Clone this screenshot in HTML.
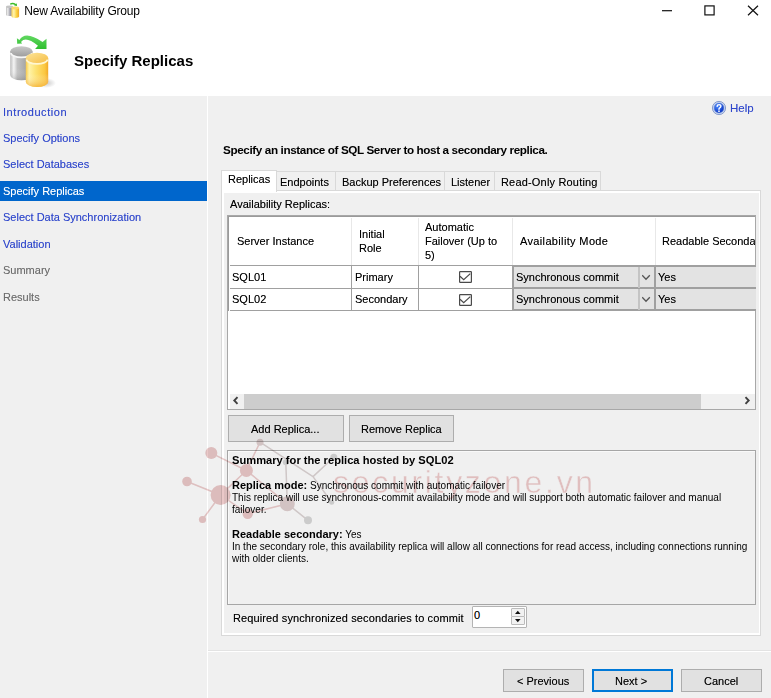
<!DOCTYPE html>
<html><head><meta charset="utf-8">
<style>
*{margin:0;padding:0;box-sizing:border-box}
html,body{width:771px;height:698px;overflow:hidden;background:#f0f0f0;font-family:"Liberation Sans",sans-serif;font-size:11px;color:#000}
.a{position:absolute}
.t{position:absolute;white-space:nowrap;line-height:13px;font-size:11px;text-shadow:0 0 0 rgba(0,0,0,.45)}
.thin{text-shadow:none}
.nav{color:#2f47cc;left:3px;text-shadow:0 0 0 rgba(47,71,204,.45)}
.navg{color:#6d6d6d;left:3px;text-shadow:0 0 0 rgba(109,109,109,.45)}
.b{font-weight:bold;text-shadow:none}
</style></head><body>
<!-- header white -->
<div class="a" style="left:0;top:0;width:771px;height:96px;background:#fff"></div>
<!-- small title icon -->
<svg class="a" style="left:0;top:0" width="24" height="22" viewBox="0 0 24 22">
 <defs>
  <linearGradient id="gs" x1="0" x2="1"><stop offset="0" stop-color="#bdbdbd"/><stop offset=".25" stop-color="#ececec"/><stop offset=".6" stop-color="#9c9ca8"/><stop offset="1" stop-color="#b4b4b4"/></linearGradient>
  <linearGradient id="ys" x1="0" x2="1"><stop offset="0" stop-color="#f8d050"/><stop offset=".3" stop-color="#fff4b0"/><stop offset=".65" stop-color="#fcd444"/><stop offset="1" stop-color="#eca828"/></linearGradient>
 </defs>
 <path d="M6 6.8 V14.8 A3.5 1.3 0 0 0 13 14.8 V6.8 Z" fill="url(#gs)"/>
 <ellipse cx="9.5" cy="6.8" rx="3.5" ry="1.3" fill="#c4c4c4"/>
 <path d="M11.5 8 V16.6 A3.8 1.4 0 0 0 19.1 16.6 V8 Z" fill="url(#ys)"/>
 <ellipse cx="15.3" cy="8" rx="3.8" ry="1.4" fill="#fbd86a"/>
 <path d="M10.2 3.2 L10.3 4.8 Q13 3.6 14.8 5 L14 5.6 L17 6 L16.8 3.2 L16 3.9 Q13 2 10.2 3.2 Z" fill="#3cbc2c"/>
</svg>
<div class="t thin" style="left:24.3px;top:5.1px;font-size:12px;letter-spacing:-0.2px;color:#000">New Availability Group</div>
<!-- window controls -->
<svg class="a" style="left:660px;top:8px" width="14" height="5" viewBox="0 0 14 5"><path d="M2 2.7 H12" stroke="#111" stroke-width="1.2"/></svg>
<svg class="a" style="left:702px;top:4px" width="14" height="13" viewBox="0 0 14 13"><rect x="2.9" y="1.9" width="9.2" height="9" fill="none" stroke="#111" stroke-width="1.2"/></svg>
<svg class="a" style="left:746px;top:4px" width="14" height="13" viewBox="0 0 14 13"><path d="M2 1.8 L12 11.3 M12 1.8 L2 11.3" stroke="#111" stroke-width="1.2"/></svg>

<!-- big header icon -->
<svg class="a" style="left:0;top:0" width="60" height="95" viewBox="0 0 60 95">
 <defs>
  <linearGradient id="g1" x1="0" x2="1"><stop offset="0" stop-color="#bcbcbc"/><stop offset=".16" stop-color="#f4f4f4"/><stop offset=".32" stop-color="#c2c2c2"/><stop offset=".7" stop-color="#a6a6a6"/><stop offset="1" stop-color="#b6b6b6"/></linearGradient>
  <linearGradient id="g1v" x1="0" y1="0" x2="0" y2="1"><stop offset="0" stop-color="#fff" stop-opacity="0"/><stop offset=".6" stop-color="#fff" stop-opacity="0"/><stop offset="1" stop-color="#777" stop-opacity=".35"/></linearGradient>
  <linearGradient id="g1t" x1="0" y1="0" x2="0" y2="1"><stop offset="0" stop-color="#c9c9c9"/><stop offset="1" stop-color="#9d9d9d"/></linearGradient>
  <linearGradient id="y1" x1="0" x2="1"><stop offset="0" stop-color="#f8c848"/><stop offset=".15" stop-color="#fff3a8"/><stop offset=".45" stop-color="#fde272"/><stop offset=".85" stop-color="#fbc740"/><stop offset="1" stop-color="#f2a928"/></linearGradient>
  <linearGradient id="y1v" x1="0" y1="0" x2="0" y2="1"><stop offset="0" stop-color="#fff" stop-opacity="0"/><stop offset=".55" stop-color="#fff" stop-opacity="0"/><stop offset="1" stop-color="#f0a020" stop-opacity=".6"/></linearGradient>
  <linearGradient id="y1t" x1="0" y1="0" x2="1" y2="1"><stop offset="0" stop-color="#fde69a"/><stop offset="1" stop-color="#f5bc44"/></linearGradient>
  <radialGradient id="sh"><stop offset="0" stop-color="#9a9a9a" stop-opacity=".55"/><stop offset="1" stop-color="#9a9a9a" stop-opacity="0"/></radialGradient>
  <linearGradient id="ar" x1="0" y1="0" x2="0" y2="1"><stop offset="0" stop-color="#62d862"/><stop offset="1" stop-color="#2fbf2f"/></linearGradient>
 </defs>
 <ellipse cx="46" cy="83" rx="10" ry="5" fill="url(#sh)"/>
 <path d="M10.2 51.5 V75 A11.2 5.2 0 0 0 32.6 75 V51.5 Z" fill="url(#g1)"/>
 <path d="M10.2 51.5 V75 A11.2 5.2 0 0 0 32.6 75 V51.5 Z" fill="url(#g1v)"/>
 <ellipse cx="21.4" cy="51.5" rx="11.2" ry="5.2" fill="url(#g1t)"/>
 <path d="M11 53 A10.4 4.4 0 0 0 31.8 53" stroke="#f6f6f6" stroke-width="1.7" fill="none"/>
 <ellipse cx="37" cy="87" rx="11" ry="3" fill="#f0b030" opacity=".0"/>
 <path d="M25.8 58 V81.8 A11.2 5.2 0 0 0 48.2 81.8 V58 Z" fill="url(#y1)"/>
 <path d="M25.8 58 V81.8 A11.2 5.2 0 0 0 48.2 81.8 V58 Z" fill="url(#y1v)"/>
 <ellipse cx="37" cy="58" rx="11.2" ry="5.2" fill="url(#y1t)"/>
 <path d="M26.6 59.5 A10.4 4.4 0 0 0 47.4 59.5" stroke="#fff6d0" stroke-width="1.7" fill="none"/>
 <path d="M16.9 38.2 L17.2 43.7 L22.1 43.4 L21 42 Q25.7 35.75 38 45.7 L35.1 48.9 L46.5 48.9 L46.5 38.7 L42.6 41.9 Q25 29.9 19.5 40 Z" fill="url(#ar)"/>
</svg>
<div class="t b" style="left:74px;top:52px;font-size:15px;line-height:18px">Specify Replicas</div>

<!-- left nav -->
<div class="a" style="left:207px;top:96px;width:1px;height:602px;background:#fff"></div>
<div class="a" style="left:0;top:181px;width:207px;height:20px;background:#0066cc"></div>
<div class="t nav" style="top:105.5px;letter-spacing:0.55px">Introduction</div>
<div class="t nav" style="top:131.5px">Specify Options</div>
<div class="t nav" style="top:158.3px">Select Databases</div>
<div class="t" style="left:3px;top:184.5px;color:#fff;text-shadow:0 0 0 rgba(255,255,255,.45)">Specify Replicas</div>
<div class="t nav" style="top:211.3px">Select Data Synchronization</div>
<div class="t nav" style="top:237.7px">Validation</div>
<div class="t navg" style="top:264.3px">Summary</div>
<div class="t navg" style="top:290.7px">Results</div>

<!-- help -->
<svg class="a" style="left:711px;top:100px" width="16" height="16" viewBox="0 0 16 16">
 <defs><radialGradient id="hb" cx=".35" cy=".3" r=".75"><stop offset="0" stop-color="#4f8cff"/><stop offset="1" stop-color="#0630c0"/></radialGradient></defs>
 <circle cx="8" cy="8" r="6.6" fill="#c8d6f0" stroke="#7d93c8" stroke-width="0.9"/>
 <circle cx="8" cy="8" r="4.9" fill="url(#hb)" stroke="#6f8fd8" stroke-width=".5"/>
 <path d="M6.1 6.4 Q6.2 4.6 8.1 4.6 Q10 4.7 9.9 6.3 Q9.8 7.3 8.7 7.9 Q8 8.3 8 9.3" stroke="#fff" stroke-width="1.4" fill="none" stroke-linecap="round"/>
 <circle cx="8" cy="11.2" r=".85" fill="#fff"/>
</svg>
<div class="t nav" style="left:730px;top:102px;font-size:11.5px">Help</div>

<div class="t b" style="left:223px;top:142.5px;font-size:11.7px;letter-spacing:-0.38px">Specify an instance of SQL Server to host a secondary replica.</div>

<!-- bottom separator -->
<div class="a" style="left:208px;top:651px;width:563px;height:1px;background:#fff"></div>
<div class="a" style="left:208px;top:650px;width:563px;height:1px;background:#e3e3e3"></div>

<!-- tabs -->
<div class="a" style="left:221px;top:190px;width:540px;height:446px;border:1px solid #d9d9d9;background:#fff"></div>
<div class="a" style="left:224px;top:193px;width:535px;height:440px;background:#f0f0f0"></div>
<div class="a" style="left:276px;top:171px;width:60px;height:19px;border:1px solid #d9d9d9;border-bottom:0;background:#f0f0f0"></div>
<div class="a" style="left:335px;top:171px;width:110px;height:19px;border:1px solid #d9d9d9;border-bottom:0;background:#f0f0f0"></div>
<div class="a" style="left:444px;top:171px;width:51px;height:19px;border:1px solid #d9d9d9;border-bottom:0;background:#f0f0f0"></div>
<div class="a" style="left:494px;top:171px;width:107px;height:19px;border:1px solid #d9d9d9;border-bottom:0;background:#f0f0f0"></div>
<div class="a" style="left:221px;top:170px;width:56px;height:22px;border:1px solid #d9d9d9;border-bottom:0;background:#fff"></div>
<div class="t" style="left:228px;top:173px">Replicas</div>
<div class="t" style="left:280px;top:175.7px">Endpoints</div>
<div class="t" style="left:342px;top:175.7px">Backup Preferences</div>
<div class="t" style="left:451px;top:175.7px">Listener</div>
<div class="t" style="left:501px;top:175.7px;letter-spacing:0.18px">Read-Only Routing</div>
<div class="t" style="left:230px;top:197.6px">Availability Replicas:</div>

<!-- grid -->
<div class="a" style="left:227px;top:215px;width:529px;height:195px;border:1px solid #a8a8a8;background:#fff"></div>
<div class="a" style="left:228px;top:216px;width:527px;height:1px;background:#9a9a9a"></div>
<div class="a" style="left:228px;top:216px;width:1px;height:95px;background:#9a9a9a"></div>
<div class="a" style="left:230px;top:265px;width:525px;height:1px;background:#a0a0a0"></div>
<div class="a" style="left:230px;top:288px;width:525px;height:1px;background:#a0a0a0"></div>
<div class="a" style="left:230px;top:310px;width:525px;height:1px;background:#a0a0a0"></div>
<div class="a" style="left:351px;top:218px;width:1px;height:47px;background:#e8e8e8"></div>
<div class="a" style="left:418px;top:218px;width:1px;height:47px;background:#e8e8e8"></div>
<div class="a" style="left:512px;top:218px;width:1px;height:47px;background:#e8e8e8"></div>
<div class="a" style="left:655px;top:218px;width:1px;height:47px;background:#e8e8e8"></div>
<div class="a" style="left:351px;top:265px;width:1px;height:46px;background:#a0a0a0"></div>
<div class="a" style="left:418px;top:265px;width:1px;height:46px;background:#a0a0a0"></div>
<div class="t" style="left:237px;top:235px">Server Instance</div>
<div class="t" style="left:359px;top:228px;line-height:13.7px">Initial<br>Role</div>
<div class="t" style="left:425px;top:221px;line-height:13.8px">Automatic<br>Failover (Up to<br>5)</div>
<div class="t" style="left:520px;top:235px;letter-spacing:0.35px">Availability Mode</div>
<div class="a" style="left:656px;top:218px;width:99px;height:47px;overflow:hidden"><div class="t" style="left:6px;top:17px">Readable Secondary</div></div>
<div class="t" style="left:232px;top:271px">SQL01</div>
<div class="t" style="left:232px;top:293px">SQL02</div>
<div class="t" style="left:355px;top:271px">Primary</div>
<div class="t" style="left:355px;top:293px">Secondary</div>
<!-- checkboxes -->
<svg class="a" style="left:459px;top:271px" width="13" height="12" viewBox="0 0 13 12"><rect x=".6" y=".6" width="11.8" height="10.8" rx=".6" fill="#fff" stroke="#4a4a4a" stroke-width="1.2"/><path d="M1 5.3 L4.7 8.7 L11.3 2.6" stroke="#4a4a4a" fill="none" stroke-width="1.25"/></svg>
<svg class="a" style="left:459px;top:294px" width="13" height="12" viewBox="0 0 13 12"><rect x=".6" y=".6" width="11.8" height="10.8" rx=".6" fill="#fff" stroke="#4a4a4a" stroke-width="1.2"/><path d="M1 5.3 L4.7 8.7 L11.3 2.6" stroke="#4a4a4a" fill="none" stroke-width="1.25"/></svg>
<!-- combo cells -->
<div class="a" style="left:512px;top:265px;width:144px;height:24px;border:2px solid #a0a0a0;background:#e3e3e3"></div>
<div class="a" style="left:512px;top:287px;width:144px;height:24px;border:2px solid #a0a0a0;background:#e3e3e3"></div>
<div class="a" style="left:638px;top:267px;width:2px;height:21px;background:#c4c4c4"></div>
<div class="a" style="left:638px;top:289px;width:2px;height:21px;background:#c4c4c4"></div>
<svg class="a" style="left:642px;top:274px" width="9" height="7" viewBox="0 0 9 7"><path d="M.2 1.3 L4 5.3 L7.8 1.3" stroke="#555" fill="none" stroke-width="1.3"/></svg>
<svg class="a" style="left:642px;top:296px" width="9" height="7" viewBox="0 0 9 7"><path d="M.2 1.3 L4 5.3 L7.8 1.3" stroke="#555" fill="none" stroke-width="1.3"/></svg>
<div class="a" style="left:654px;top:265px;width:102px;height:24px;border:2px solid #a0a0a0;border-right:0;background:#e3e3e3"></div>
<div class="a" style="left:654px;top:287px;width:102px;height:24px;border:2px solid #a0a0a0;border-right:0;background:#e3e3e3"></div>
<div class="t" style="left:516px;top:271px">Synchronous commit</div>
<div class="t" style="left:516px;top:293px">Synchronous commit</div>
<div class="t" style="left:658px;top:271px">Yes</div>
<div class="t" style="left:658px;top:293px">Yes</div>
<!-- scrollbar -->
<div class="a" style="left:230px;top:394px;width:525px;height:15px;background:#f0f0f0"></div>
<div class="a" style="left:244px;top:394px;width:457px;height:15px;background:#cdcdcd"></div>
<svg class="a" style="left:232px;top:396px" width="8" height="9" viewBox="0 0 8 9"><path d="M5.5 1.2 L2.3 4.5 L5.5 7.8" stroke="#404040" fill="none" stroke-width="1.9"/></svg>
<svg class="a" style="left:743px;top:396px" width="8" height="9" viewBox="0 0 8 9"><path d="M2.5 1.2 L5.7 4.5 L2.5 7.8" stroke="#404040" fill="none" stroke-width="1.9"/></svg>

<!-- buttons -->
<div class="a" style="left:228px;top:415px;width:116px;height:27px;border:1px solid #adadad;background:#e1e1e1"></div>
<div class="t" style="left:251px;top:423px">Add Replica...</div>
<div class="a" style="left:349px;top:415px;width:105px;height:27px;border:1px solid #adadad;background:#e1e1e1"></div>
<div class="t" style="left:361px;top:423px">Remove Replica</div>

<!-- summary -->
<div class="a" style="left:227px;top:450px;width:529px;height:155px;border:1px solid #a6a6a6;background:#f0f0f0;box-shadow:inset 1px 1px 0 #f9f9f9"></div>
<div class="t b" style="left:232px;top:453.8px;font-size:11.15px">Summary for the replica hosted by SQL02</div>
<div class="t thin" style="left:232px;top:479px;line-height:12px;font-size:10px"><b style="font-size:11px">Replica mode:</b> Synchronous commit with automatic failover<br>This replica will use synchronous-commit availability mode and will support both automatic failover and manual<br>failover.</div>
<div class="t thin" style="left:232px;top:527.5px;line-height:12px;font-size:10px"><b style="font-size:11px">Readable secondary:</b> Yes<br>In the secondary role, this availability replica will allow all connections for read access, including connections running<br>with older clients.</div>


<!-- watermark -->
<svg class="a" style="left:0;top:0;mix-blend-mode:multiply" width="771" height="698" viewBox="0 0 771 698">
 <g stroke="#eccccc" stroke-width="1.5" fill="none">
  <path d="M211.3 453.1 L246.4 470.5 M187 481.5 L220.6 495 L246.4 470.5 M220.6 495 L202.5 519.5 M220.6 495 L247.7 513.7 L287.3 503.8 L246.4 470.5 L260 442.2"/>
 </g>
 <g stroke="#dcd4d4" stroke-width="1.5" fill="none">
  <path d="M260 442.2 L313 476.6 M285.8 462.2 L287.3 503.8 L308 520.3 M313 476.6 L333.8 457.2 M313 476.6 L331.7 502.3"/>
 </g>
 <g fill="#eac8c8">
  <circle cx="211.3" cy="453.1" r="6"/>
  <circle cx="246.4" cy="470.5" r="6.5"/>
  <circle cx="187" cy="481.5" r="4.8"/>
  <circle cx="220.6" cy="495" r="10"/>
  <circle cx="202.5" cy="519.5" r="3.6"/>
  <circle cx="247.7" cy="513.7" r="5.2"/>
  <circle cx="260" cy="442.2" r="3.5" fill="#e0d0d0"/>
  <circle cx="287.3" cy="503.8" r="7.5" fill="#e0d0d0"/>
 </g>
 <g fill="#d8d8d8">
  <circle cx="285.8" cy="462.2" r="3"/>
  <circle cx="308" cy="520.3" r="4"/>
  <circle cx="333.8" cy="457.2" r="3.5"/>
  <circle cx="331.7" cy="502.3" r="2.5"/>
 </g>
 <text x="333" y="492.5" font-family="Liberation Sans" font-size="32" letter-spacing="2.7" fill="#eecaca" stroke="#fff" stroke-width="0.5">securityzone.vn</text>
</svg>
<div class="t" style="left:233px;top:612px;letter-spacing:0.12px">Required synchronized secondaries to commit</div>
<div class="a" style="left:472px;top:606px;width:55px;height:22px;border:1px solid #b4b4b4;border-radius:1px;background:#fff"></div>
<div class="t" style="left:474px;top:609px">0</div>
<div class="a" style="left:511px;top:608px;width:14px;height:9px;border:1px solid #bcbcbc;border-radius:1px;background:#f2f2f2"></div>
<div class="a" style="left:511px;top:616px;width:14px;height:9px;border:1px solid #bcbcbc;border-radius:1px;background:#f2f2f2"></div>
<svg class="a" style="left:514px;top:610px" width="8" height="14" viewBox="0 0 8 14"><path d="M1 3.9 L3.8 0.8 L6.6 3.9z M1 9.1 L3.8 12.3 L6.6 9.1z" fill="#111"/></svg>

<!-- bottom buttons -->
<div class="a" style="left:503px;top:669px;width:81px;height:23px;border:1px solid #adadad;background:#e1e1e1"></div>
<div class="t" style="left:517px;top:675px">&lt; Previous</div>
<div class="a" style="left:592px;top:669px;width:81px;height:23px;border:2px solid #0078d7;background:#e1e1e1"></div>
<div class="t" style="left:615px;top:675px">Next &gt;</div>
<div class="a" style="left:681px;top:669px;width:81px;height:23px;border:1px solid #adadad;background:#e1e1e1"></div>
<div class="t" style="left:704px;top:675px">Cancel</div>
</body></html>
